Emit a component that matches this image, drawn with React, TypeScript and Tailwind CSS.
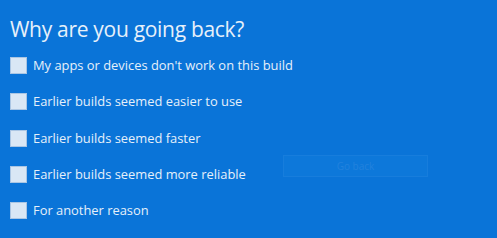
import React from 'react';

const reasons = [
  "My apps or devices don't work on this build",
  'Earlier builds seemed easier to use',
  'Earlier builds seemed faster',
  'Earlier builds seemed more reliable',
  'For another reason',
];

export default function App() {
  return (
    <div
      className="relative w-[497px] h-[238px] overflow-hidden bg-[#0a74d8] text-[#e6f0fa]"
      style={{ fontFamily: '"Open Sans", "Noto Sans", sans-serif' }}
    >
      <div className="pl-[10px] pt-[14px]">
        <h1 className="text-[21px] leading-[30px] font-normal tracking-[-0.3px]">Why are you going back?</h1>
        <ul className="mt-[13px] flex flex-col gap-[19.25px]">
          {reasons.map((r) => (
            <li key={r} className="flex items-center gap-[6px] h-[17px]">
              <span className="w-[17px] h-[17px] shrink-0 bg-[#d9e7f5] border border-[#aac6e4]" />
              <span className="text-[12.9px] leading-[17px]">{r}</span>
            </li>
          ))}
        </ul>
      </div>
      {/* faded button behind */}
      <div className="absolute left-[283px] top-[155px] w-[145px] h-[22px] bg-[#0d78da] border border-[#177ddc] flex items-center justify-center">
        <span className="text-[10px] text-[#2282dd]">Go back</span>
      </div>
    </div>
  );
}
